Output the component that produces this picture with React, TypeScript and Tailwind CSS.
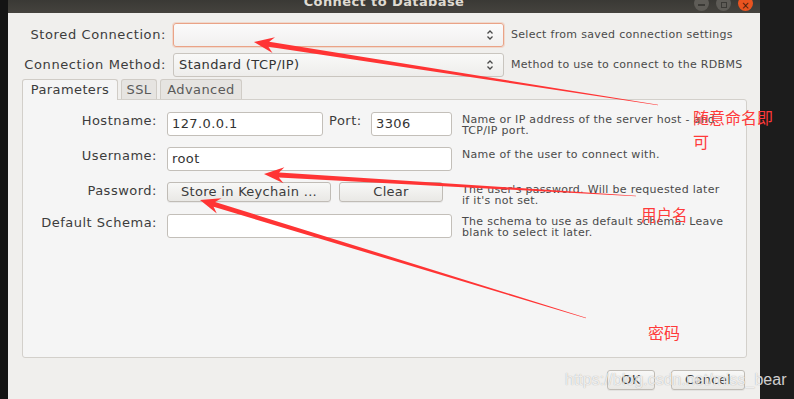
import type React from "react"

type Pt = { x: number; y: number }

// tapered red annotation arrow, tip is the pointed end
const arrowPoints = (tip: Pt, tail: Pt) => {
  const dx = tail.x - tip.x
  const dy = tail.y - tip.y
  const len = Math.hypot(dx, dy)
  const ux = dx / len
  const uy = dy / len
  const px = -uy
  const py = ux
  const headLen = 20
  const headW = 8
  const notch = 15
  const shaftW = 5
  const tailW = 0.6
  const at = (d: number, w: number) =>
    `${(tip.x + ux * d + px * w).toFixed(1)},${(tip.y + uy * d + py * w).toFixed(1)}`
  return [
    at(0, 0),
    at(headLen, headW),
    at(notch, shaftW / 2),
    at(len, tailW / 2),
    at(len, -tailW / 2),
    at(notch, -shaftW / 2),
    at(headLen, -headW),
  ].join(" ")
}

const arrows: { tip: Pt; tail: Pt }[] = [
  { tip: { x: 254, y: 42 }, tail: { x: 658, y: 105 } },
  { tip: { x: 264, y: 174 }, tail: { x: 636, y: 196 } },
  { tip: { x: 200, y: 200 }, tail: { x: 586, y: 318 } },
]

const SpinIcon = () => (
  <svg width="8" height="12" viewBox="0 0 8 12" className="shrink-0">
    <path d="M1.5 4.5 L4 2 L6.5 4.5" fill="none" stroke="#4a4a4a" strokeWidth="1.3" />
    <path d="M1.5 7.5 L4 10 L6.5 7.5" fill="none" stroke="#4a4a4a" strokeWidth="1.3" />
  </svg>
)

const font = { fontFamily: '"DejaVu Sans", "Noto Sans", sans-serif' }

const Input: React.FC<{ w: string; value?: string }> = ({ w, value }) => (
  <div
    className={`${w} h-[24px] bg-white border border-[#c3bfb9] rounded-[3px] flex items-center px-[4px] text-[13px] tracking-[0.4px] text-[#333]`}
  >
    {value}
  </div>
)

const Button: React.FC<{ w: string; label: string }> = ({ w, label }) => (
  <div
    className={`${w} h-[20px] border border-[#c0bcb6] rounded-[3px] bg-gradient-to-b from-[#f8f8f7] to-[#e9e8e5] flex items-center justify-center text-[13px] tracking-[0.3px] text-[#3c3c3c] whitespace-nowrap shadow-[0_1px_0_rgba(0,0,0,0.05)]`}
  >
    {label}
  </div>
)

const FormRow: React.FC<{ label: string; desc: string[]; children: React.ReactNode; cls: string }> = ({
  label,
  desc,
  children,
  cls,
}) => (
  <div className={`flex ${cls}`}>
    <div className="w-[134px] text-right text-[13px] tracking-[0.5px] text-[#3c3c3c] leading-[18px] whitespace-nowrap">
      {label}
    </div>
    <div className="w-[285px] ml-[10px] flex items-start">{children}</div>
    <div className="ml-[10px] text-[11px] tracking-[0.3px] leading-[11px] text-[#4a4a4a] pt-[2px] whitespace-nowrap">
      {desc.map((d) => (
        <div key={d}>{d}</div>
      ))}
    </div>
  </div>
)

export default function App() {
  return (
    <div className="relative w-[794px] h-[399px] flex overflow-hidden bg-[#1c1c1c]" style={font}>
      <div className="w-[8px] bg-[#141414]" />

      {/* dialog */}
      <div className="w-[752px] flex flex-col bg-[#f0efed]">
        {/* title bar */}
        <div className="h-[13px] bg-gradient-to-b from-[#3a3935] to-[#45433e] relative flex justify-center overflow-hidden">
          <div className="text-[13px] font-bold tracking-[0.4px] text-[#dfdbd2] leading-[13px] mt-[-5px]">
            Connect to Database
          </div>
          <div className="absolute right-[7px] top-[-4px] flex gap-[7px]">
            <div className="w-[15px] h-[15px] rounded-full bg-[#5e5c57] flex items-center justify-center">
              <div className="w-[7px] h-[2px] bg-[#3b3a36] mt-[3px]" />
            </div>
            <div className="w-[15px] h-[15px] rounded-full bg-[#5e5c57] flex items-center justify-center">
              <div className="w-[6px] h-[6px] border border-[#3b3a36] mt-[2px]" />
            </div>
            <div className="w-[15px] h-[15px] rounded-full bg-[#e95420] flex items-center justify-center text-[#4a1c0a] text-[10px] leading-none pt-[4px]">
              ×
            </div>
          </div>
        </div>

        <div className="pl-[14px] pr-[13px] pt-[10px] flex flex-col">
          {/* stored connection */}
          <div className="flex items-center">
            <div className="w-[144px] text-right text-[13px] tracking-[0.6px] text-[#3c3c3c] whitespace-nowrap">
              Stored Connection:
            </div>
            <div className="ml-[7px] w-[331px] h-[24px] rounded-[3px] border border-[#eaa387] bg-gradient-to-b from-[#fbfbfb] to-[#f1f0ef] shadow-[0_0_0_1px_rgba(240,150,110,0.25)] flex items-center justify-end pr-[9px]">
              <SpinIcon />
            </div>
            <div className="ml-[7px] text-[11px] tracking-[0.3px] text-[#4a4a4a] whitespace-nowrap">
              Select from saved connection settings
            </div>
          </div>

          {/* connection method */}
          <div className="flex items-center mt-[6px]">
            <div className="w-[144px] text-right text-[13px] tracking-[0.6px] text-[#3c3c3c] whitespace-nowrap">
              Connection Method:
            </div>
            <div className="ml-[7px] w-[331px] h-[24px] rounded-[3px] border border-[#c9c5bf] bg-gradient-to-b from-[#f9f9f8] to-[#eeedeb] flex items-center justify-between pl-[5px] pr-[9px] text-[13px] tracking-[0.4px] text-[#333]">
              Standard (TCP/IP)
              <SpinIcon />
            </div>
            <div className="ml-[7px] text-[11px] tracking-[0.3px] text-[#4a4a4a] whitespace-nowrap">
              Method to use to connect to the RDBMS
            </div>
          </div>

          {/* tabs */}
          <div className="flex gap-[3px] mt-[2px] relative z-10">
            <div className="w-[96px] h-[21px] border border-b-0 border-[#d0ccc6] rounded-t-[3px] bg-[#f5f5f5] flex items-center justify-center text-[13px] tracking-[0.4px] text-[#3c3c3c]">
              Parameters
            </div>
            <div className="w-[36px] h-[20px] border border-b-0 border-[#d0ccc6] rounded-t-[3px] bg-[#e6e4e1] flex items-center justify-center text-[13px] tracking-[0.4px] text-[#5a5a5a]">
              SSL
            </div>
            <div className="w-[82px] h-[20px] border border-b-0 border-[#d0ccc6] rounded-t-[3px] bg-[#e6e4e1] flex items-center justify-center text-[13px] tracking-[0.4px] text-[#5a5a5a]">
              Advanced
            </div>
          </div>

          {/* panel */}
          <div className="w-[725px] h-[259px] mt-[-1px] border border-[#d3d0cb] rounded-b-[3px] rounded-tr-[3px] bg-[#f5f5f5] pt-[12px]">
            <FormRow
              label="Hostname:"
              desc={["Name or IP address of the server host - and", "TCP/IP port."]}
              cls="h-[24px]"
            >
              <Input w="w-[156px]" value="127.0.0.1" />
              <div className="w-[48px] text-[13px] tracking-[0.5px] text-[#3c3c3c] pl-[6px] leading-[18px]">Port:</div>
              <Input w="w-[81px]" value="3306" />
            </FormRow>
            <FormRow label="Username:" desc={["Name of the user to connect with."]} cls="h-[24px] mt-[11px]">
              <Input w="w-[285px]" value="root" />
            </FormRow>
            <FormRow
              label="Password:"
              desc={["The user's password. Will be requested later", "if it's not set."]}
              cls="h-[20px] mt-[11px]"
            >
              <Button w="w-[164px]" label="Store in Keychain ..." />
              <div className="ml-[8px]">
                <Button w="w-[104px]" label="Clear" />
              </div>
            </FormRow>
            <FormRow
              label="Default Schema:"
              desc={["The schema to use as default schema. Leave", "blank to select it later."]}
              cls="h-[24px] mt-[12px]"
            >
              <Input w="w-[285px]" />
            </FormRow>
          </div>

          {/* footer buttons */}
          <div className="flex justify-end gap-[16px] mt-[12px] pr-[2px]">
            <Button w="w-[48px]" label="OK" />
            <Button w="w-[74px]" label="Cancel" />
          </div>
        </div>
      </div>

      <div className="flex-1 bg-[#1c1c1c]" />

      {/* annotation arrows */}
      <svg className="absolute inset-0 pointer-events-none" width="794" height="399" viewBox="0 0 794 399">
        {arrows.map((a, i) => (
          <polygon key={i} points={arrowPoints(a.tip, a.tail)} fill="#ff3434" />
        ))}
      </svg>

      {/* annotation labels */}
      <div
        className="absolute left-[693px] top-[105px] text-[16px] leading-[24px] text-[#ff3a3a] whitespace-nowrap"
        style={{ fontFamily: '"Noto Sans CJK SC", sans-serif' }}
      >
        随意命名即
        <br />可
      </div>
      <div
        className="absolute left-[641px] top-[202px] text-[15.5px] leading-[24px] text-[#ff3a3a]"
        style={{ fontFamily: '"Noto Sans CJK SC", sans-serif' }}
      >
        用户名
      </div>
      <div
        className="absolute left-[648px] top-[320px] text-[16px] leading-[24px] text-[#ff3a3a]"
        style={{ fontFamily: '"Noto Sans CJK SC", sans-serif' }}
      >
        密码
      </div>

      {/* watermark */}
      <div
        className="absolute left-[565px] top-[369px] text-[16px] leading-[22px] text-white/80 whitespace-nowrap [text-shadow:0_0_1px_rgba(0,0,0,0.35)]"
        style={{ fontFamily: '"Liberation Sans", Arial, sans-serif' }}
      >
        https://blog.csdn.net/miss_bear
      </div>
    </div>
  )
}
